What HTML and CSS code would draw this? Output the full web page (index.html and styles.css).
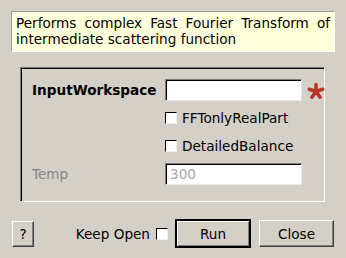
FILE: index.html
```html
<!DOCTYPE html>
<html lang="en">
<head>
    <meta charset="UTF-8">
    <title>FFT Dialog</title>
    <link rel="stylesheet" href="styles.css">
</head>
<body>
    <div class="dialog">
        <p class="desc">Performs complex Fast Fourier Transform of intermediate scattering function</p>

        <div class="group">
            <label class="lbl bold">InputWorkspace</label>
            <input type="text" class="field">
            <svg class="star" width="18" height="18" viewBox="0 0 18 18">
                <g stroke="#b8352a" stroke-width="3.6" stroke-linecap="round">
                    <line x1="9" y1="9.5" x2="9" y2="2.5"/>
                    <line x1="9" y1="9.5" x2="15.7" y2="7.3"/>
                    <line x1="9" y1="9.5" x2="13.1" y2="15.2"/>
                    <line x1="9" y1="9.5" x2="4.9" y2="15.2"/>
                    <line x1="9" y1="9.5" x2="2.3" y2="7.3"/>
                </g>
            </svg>

            <span></span>
            <label class="check span2"><span class="box"></span>FFTonlyRealPart</label>

            <span></span>
            <label class="check span2"><span class="box"></span>DetailedBalance</label>

            <label class="lbl muted">Temp</label>
            <input type="text" class="field" placeholder="300" disabled>
            <span></span>
        </div>

        <div class="buttons">
            <button class="btn help">?</button>
            <label class="keep">Keep Open <span class="box"></span></label>
            <button class="btn run">Run</button>
            <button class="btn close">Close</button>
        </div>
    </div>
</body>
</html>
```

FILE: styles.css
```css
body {
    margin: 0;
    background: #d4d0c8;
    font-family: "DejaVu Sans", sans-serif;
    font-size: 13.6px;
    color: #000;
}
.dialog {
    width: 346px;
    height: 258px;
    padding-top: 11px;
    box-sizing: border-box;
}
.desc {
    margin: 0 0 0 11px;
    width: 324px;
    height: 41px;
    box-sizing: border-box;
    padding: 3px 4px 0 4px;
    background: #ffffdc;
    border: 1px solid #ffffff;
    border-top-color: #9a9a9a;
    border-left-color: #9a9a9a;
    text-align: justify;
    line-height: 16px;
}
.group {
    margin: 15px 0 0 20px;
    width: 305px;
    height: 135px;
    box-sizing: border-box;
    border: 1px solid #ffffff;
    border-top-color: #7a7a7a;
    border-left-color: #7a7a7a;
    box-shadow: inset 1px 1px 0 #000;
    padding: 11px 0 0 11px;
    display: grid;
    grid-template-columns: 133px 137px 22px;
    grid-template-rows: 22px 22px 22px 22px;
    row-gap: 6px;
    align-items: center;
}
.lbl {
    padding-bottom: 1px;
}
.bold {
    font-weight: bold;
}
.muted {
    color: #848484;
}
.field {
    width: 137px;
    height: 22px;
    box-sizing: border-box;
    margin: 0;
    padding: 0 4px;
    font: inherit;
    background: #fff;
    border: 1px solid #e6e6e6;
    border-top-color: #7a7a7a;
    border-left-color: #7a7a7a;
    box-shadow: inset 1px 1px 0 #000;
    outline: none;
}
.field::placeholder {
    color: #a8a8a8;
}
.star {
    margin-left: 5px;
    margin-top: 1px;
}
.span2 {
    grid-column: span 2;
}
.check {
    display: flex;
    align-items: center;
    gap: 5px;
}
.box {
    display: inline-block;
    width: 12px;
    height: 12px;
    box-sizing: border-box;
    background: #fff;
    border: 1px solid #f0f0f0;
    border-top-color: #000;
    border-left-color: #000;
}
.buttons {
    display: flex;
    align-items: center;
    margin-top: 17px;
    padding: 0 12px;
}
.btn {
    height: 27px;
    box-sizing: border-box;
    margin: 0;
    padding: 0;
    font: inherit;
    color: #000;
    background: #d4d0c8;
    border: 1px solid #404040;
    border-top-color: #fff;
    border-left-color: #fff;
    box-shadow: inset -1px -1px 0 #808080;
}
.help {
    width: 22px;
    height: 26px;
}
.keep {
    display: flex;
    align-items: center;
    gap: 6px;
    margin-left: auto;
}
.run {
    width: 76px;
    height: 29px;
    margin-left: 7px;
    border-width: 2px;
    border-color: #000;
    box-shadow: inset 1px 1px 0 #fff, inset -1px -1px 0 #808080;
}
.close {
    width: 75px;
    height: 27px;
    margin-left: 8px;
}
```
